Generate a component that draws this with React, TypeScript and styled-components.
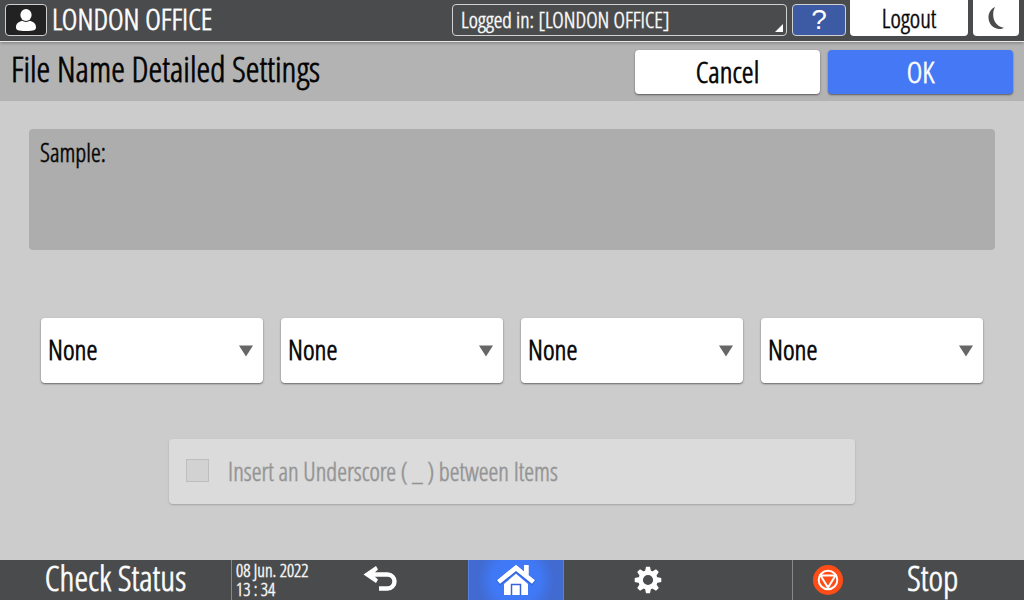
import React, { useState } from "react";
import styled, { createGlobalStyle, css } from "styled-components";

const GlobalStyle = createGlobalStyle`
  *, *::before, *::after { box-sizing: border-box; }
  body { margin: 0; }
  body, button, select, input {
    font-family: "Open Sans Condensed Light", "Roboto Condensed", "Open Sans", sans-serif;
    font-weight: 300;
  }
  button { padding: 0; border: 0; cursor: pointer; color: inherit; background: none; }
`;

const size = { large: 35, medium: 30, field: 28, body: 25, compact: 22, small: 18 };

/* The light face needs a thicker stem; larger text takes the full outline. */
const text = (name: keyof typeof size) => css`
  font-size: ${size[name]}px;
  -webkit-text-stroke: 1px
    color-mix(in srgb, currentColor ${size[name] >= 28 ? 80 : 55}%, transparent);
`;

const Screen = styled.div`
  display: flex;
  flex-direction: column;
  min-height: 100vh;
  background: #cccccc;
  color: #000;
`;

const StatusBar = styled.header`
  position: relative;
  display: flex;
  align-items: flex-start;
  height: 42px;
  padding: 0 5px;
  background: #4a4b4c;
  border-bottom: 1px solid #e8e8e8;
  box-shadow: 0 1px 3px rgba(0, 0, 0, 0.3);
`;

const outlined = css`
  height: 32px;
  margin-top: 4px;
  border: 1px solid #d0d0d0;
  border-radius: 4px;
`;

const UserButton = styled.button`
  ${outlined}
  display: flex;
  align-items: center;
  justify-content: center;
  width: 42px;
  background: #222;
`;

const OfficeName = styled.span`
  ${text("medium")}
  flex: 1;
  padding-left: 5px;
  line-height: 38px;
  color: #fff;
`;

const SessionButton = styled.button`
  ${outlined}
  ${text("compact")}
  display: flex;
  justify-content: space-between;
  align-items: flex-end;
  width: 335px;
  padding: 0 3px 3px 8px;
  line-height: 26px;
  color: #fff;
`;

const HelpButton = styled.button`
  ${outlined}
  width: 54px;
  margin-left: 5px;
  background: #3c5ba4;
  color: #fff;
  font-family: "Liberation Sans", sans-serif;
  font-weight: 400;
  font-size: ${size.field}px;
  line-height: 30px;
`;

const TabButton = styled.button<{ $width: number }>`
  ${text("body")}
  display: flex;
  align-items: center;
  justify-content: center;
  width: ${(p) => p.$width}px;
  height: 36px;
  margin-left: 4px;
  border-radius: 0 0 4px 4px;
  background: #fff;
  color: #000;

  & + & { margin-left: 5px; }
`;

const TitleBar = styled.div`
  display: flex;
  align-items: flex-start;
  gap: 8px;
  height: 59px;
  padding: 8px 11px 0;
  background: #b3b3b3;
`;

const Title = styled.h1`
  ${text("large")}
  flex: 1;
  margin: 0;
  font-weight: 300;
  line-height: 38px;
`;

const ActionButton = styled.button<{ $primary?: boolean }>`
  ${text("medium")}
  width: 185px;
  height: 44px;
  border-radius: 4px;
  background: ${(p) => (p.$primary ? "#4478f4" : "#fff")};
  color: ${(p) => (p.$primary ? "#fff" : "#000")};
  line-height: 44px;
  box-shadow: 0 1px 2px rgba(0, 0, 0, 0.5);
`;

const Content = styled.main`
  display: flex;
  flex: 1;
  flex-direction: column;
  padding: 28px 29px 56px;
`;

const SampleBox = styled.section`
  ${text("body")}
  height: 121px;
  padding: 4px 11px;
  border-radius: 4px;
  background: #adadad;
  line-height: 38px;
`;

const Selectors = styled.div`
  display: grid;
  grid-template-columns: repeat(4, 1fr);
  gap: 18px;
  margin: 68px 12px 56px;
`;

const SelectField = styled.label`
  display: grid;
  align-items: center;
  height: 65px;
  border-radius: 4px;
  background: #fff;
  box-shadow: 0 1px 2px rgba(0, 0, 0, 0.5);

  > * { grid-area: 1 / 1; }
  > svg { justify-self: end; margin-right: 10px; pointer-events: none; }
`;

const Select = styled.select`
  ${text("field")}
  appearance: none;
  width: 100%;
  height: 100%;
  padding: 0 28px 4px 7px;
  border: 0;
  background: transparent;
  color: #000;
`;

const OptionCard = styled.label`
  ${text("body")}
  display: flex;
  align-items: center;
  align-self: center;
  width: 71%;
  height: 65px;
  padding: 0 0 2px 17px;
  border-radius: 4px;
  background: #dbdbdb;
  color: #929292;
  box-shadow: 0 1px 2px rgba(0, 0, 0, 0.2);
`;

const CheckBox = styled.input`
  appearance: none;
  width: 23px;
  height: 23px;
  margin: 0 19px 0 0;
  border: 1px solid #bdbdbd;
  background: #d2d2d2;
`;

const Footer = styled.footer`
  display: grid;
  grid-template-columns: 231fr 89fr 148fr 96fr 228fr 232fr;
  height: 40px;
  background: #4a4b4c;
  color: #fff;
`;

const FooterButton = styled.button<{ $active?: boolean }>`
  ${text("large")}
  display: flex;
  align-items: center;
  justify-content: center;
  min-width: 0;
  line-height: 36px;
  ${(p) =>
    p.$active &&
    css`
      border: solid #5580e0;
      border-width: 0 1px;
      background: radial-gradient(circle at center, #3f7cff 0, #4078f4 24px, #416bd0 38px);
    `}
`;

const FooterLabel = styled.span`
  height: 40px;
`;

const BackButton = styled(FooterButton)`
  padding-right: 28px;
`;

const SettingsButton = styled(FooterButton)`
  padding-right: 60px;
`;

const StopButton = styled(FooterButton)`
  justify-content: flex-start;
  gap: 64px;
  padding-left: 20px;
  border-left: 1px solid #888;
`;

const Clock = styled.time`
  ${text("small")}
  padding: 1px 0 0 4px;
  border-left: 1px solid #888;
  line-height: 19px;
  white-space: nowrap;
`;

const FIELDS = ["First item", "Second item", "Third item", "Fourth item"];

function Arrow() {
  return (
    <svg width="14" height="12" viewBox="0 0 14 12" aria-hidden="true">
      <path d="M0 0.5H14L7 11.5Z" fill="#666" />
    </svg>
  );
}

export default function App() {
  const [items, setItems] = useState(FIELDS.map(() => "None"));

  return (
    <>
      <GlobalStyle />
      <Screen>
        <StatusBar>
          <UserButton aria-label="User">
            <svg width="22" height="24" viewBox="0 0 22 24" fill="#fff" aria-hidden="true">
              <ellipse cx="11" cy="7" rx="5.6" ry="6" />
              <path d="M1 19.5C1 15.5 3.8 13.8 7 12.8C9.5 14.3 12.5 14.3 15 12.8C18.2 13.8 21 15.5 21 19.5C21 22 19 23 11 23S1 22 1 19.5Z" />
            </svg>
          </UserButton>
          <OfficeName>LONDON OFFICE</OfficeName>
          <SessionButton>
            Logged in: [LONDON OFFICE]
            <svg width="8" height="8" viewBox="0 0 8 8" aria-hidden="true">
              <path d="M8 0V8H0Z" fill="#fff" />
            </svg>
          </SessionButton>
          <HelpButton aria-label="Help">?</HelpButton>
          <TabButton $width={118}>Logout</TabButton>
          <TabButton $width={46} aria-label="Energy saver">
            <svg width="18" height="24" viewBox="0 0 18 24" aria-hidden="true">
              <path d="M8 1C3.8 3 1.5 7 1.5 11.5C1.5 18 6.5 23 12.5 23C14.2 23 15.8 22.5 17 21.7C11 21 7 16.5 6.3 10.5C5.9 7 6.5 4 8 1Z" fill="#4a4b4c" />
            </svg>
          </TabButton>
        </StatusBar>

        <TitleBar>
          <Title>File Name Detailed Settings</Title>
          <ActionButton>Cancel</ActionButton>
          <ActionButton $primary>OK</ActionButton>
        </TitleBar>

        <Content>
          <SampleBox>Sample:</SampleBox>
          <Selectors>
            {FIELDS.map((name, i) => (
              <SelectField key={name}>
                <Select
                  aria-label={name}
                  value={items[i]}
                  onChange={(e) => setItems(items.map((v, j) => (j === i ? e.target.value : v)))}
                >
                  <option>None</option>
                </Select>
                <Arrow />
              </SelectField>
            ))}
          </Selectors>
          <OptionCard>
            <CheckBox type="checkbox" disabled />
            Insert an Underscore ( _ ) between Items
          </OptionCard>
        </Content>

        <Footer>
          <FooterButton>
            <FooterLabel>Check Status</FooterLabel>
          </FooterButton>
          <Clock dateTime="2022-06-08T13:34">
            08 Jun. 2022
            <br />
            13 : 34
          </Clock>
          <BackButton aria-label="Back">
            <svg width="34" height="28" viewBox="0 0 34 28" aria-hidden="true">
              <path d="M5 8.5H24.5A7 7 0 0 1 24.5 22.5H16" fill="none" stroke="#fff" strokeWidth="4.4" />
              <path d="M0.5 8.5L13 0L15 3.5L9.5 8.5L15 13.5L13 17Z" fill="#fff" />
            </svg>
          </BackButton>
          <FooterButton $active aria-label="Home">
            <svg width="40" height="32" viewBox="0 0 40 32" aria-hidden="true">
              <path d="M28 1H32.5V13L28 9.5Z" fill="#fff" />
              <path d="M8 31V20L20 9.8L32 20V31Z" fill="#fff" />
              <path d="M2 19L20 4.500L38 19" fill="none" stroke="#3565d8" strokeWidth="6.500" />
              <path d="M28 1H32.5V13L28 9.500Z" fill="#fff" />
              <path d="M2.500 18L20 3.800L37.500 18" fill="none" stroke="#fff" strokeWidth="4.800" />
              <path d="M15.500 31V20.500H24.500V31" fill="none" stroke="#3565d8" strokeWidth="1.500" />
            </svg>
          </FooterButton>
          <SettingsButton aria-label="Settings">
            <svg width="28" height="28" viewBox="-14 -14 28 28" aria-hidden="true">
              <circle r="7.4" fill="none" stroke="#fff" strokeWidth="4.6" />
              {[0, 45, 90, 135, 180, 225, 270, 315].map((a) => (
                <path key={a} transform={`rotate(${a})`} d="M-3 -8.5L-2 -13.3H2L3 -8.5Z" fill="#fff" />
              ))}
            </svg>
          </SettingsButton>
          <StopButton>
            <svg width="30" height="30" viewBox="-15 -15 30 30" aria-hidden="true">
              <circle r="15" fill="#ff4d17" />
              <circle r="9.3" fill="none" stroke="#fff" strokeWidth="2" />
              <path d="M-7.5 -4.5H7.5L0 7.5Z" fill="none" stroke="#fff" strokeWidth="2" />
            </svg>
            <FooterLabel>Stop</FooterLabel>
          </StopButton>
        </Footer>
      </Screen>
    </>
  );
}
